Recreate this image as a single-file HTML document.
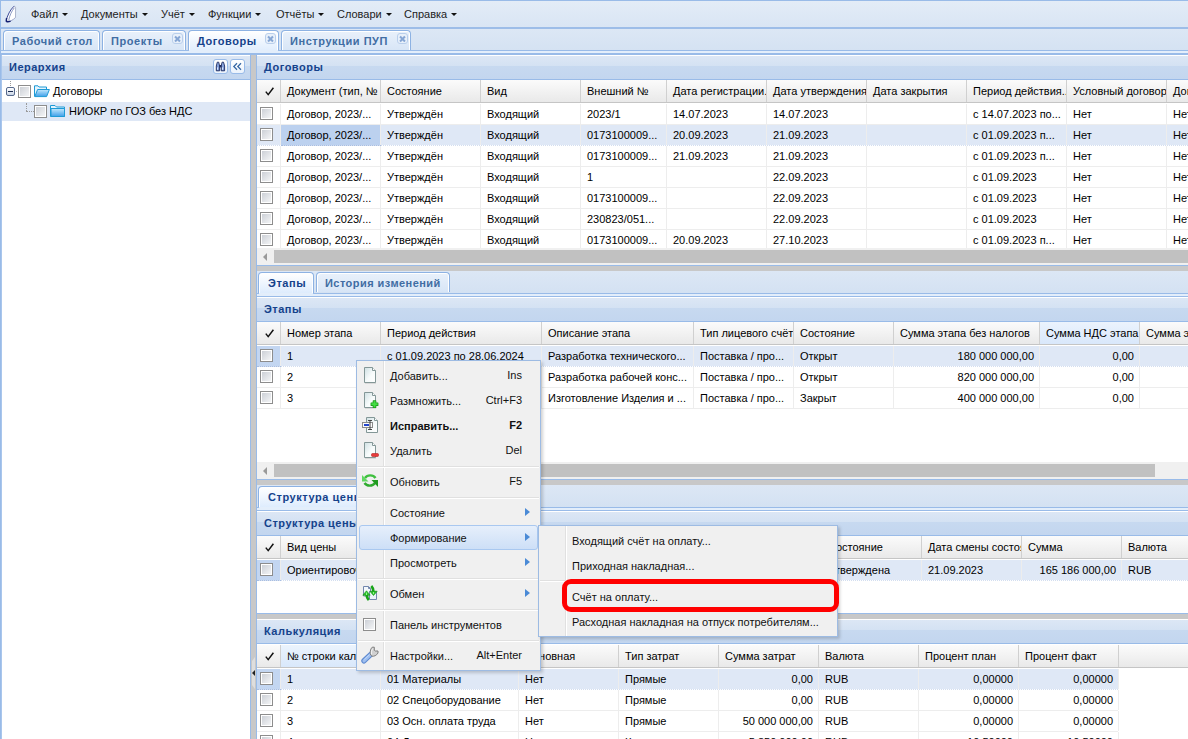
<!DOCTYPE html><html><head><meta charset="utf-8"><style>
*{box-sizing:border-box}
html,body{margin:0;padding:0}
body{width:1188px;height:739px;overflow:hidden;position:relative;font:11px "Liberation Sans",sans-serif;background:#fff;color:#000}
.a{position:absolute}
.t{position:absolute;white-space:nowrap;line-height:13px}
.menubar{left:0;top:0;width:1188px;height:29px;background:linear-gradient(#e3ecf7,#d9e5f4);border-top:1px solid #99bbe8;border-left:1px solid #99bbe8;border-bottom:2px solid #9dbde8}
.arr{display:inline-block;vertical-align:middle;margin-left:4px;margin-top:-1px;width:0;height:0;border-left:3px solid transparent;border-right:3px solid transparent;border-top:3px solid #111}
.tabbar{left:0;top:29px;width:1188px;height:26px;background:linear-gradient(#dce7f5,#d3e1f2);border-left:1px solid #99bbe8}
.tab{position:absolute;top:30px;height:21px;border:1px solid #8db2e3;border-bottom:none;border-radius:4px 4px 0 0;background:linear-gradient(#e9f1fb,#d7e5f6);box-shadow:inset 1px 1px 0 #fff,inset -1px 0 0 #fff}
.tab.act{background:linear-gradient(#ffffff,#deecfd);height:22px}
.tabtxt{position:absolute;top:4px;font-weight:bold;color:#416da3;letter-spacing:0.55px;white-space:nowrap;line-height:13px}
.tab.act .tabtxt{color:#15428b}
.cls{position:absolute;top:2px;width:11px;height:11px;border:1px solid #b9cfec;border-radius:3px;background:#e8f0fa}
.cls:before,.cls:after{content:"";position:absolute;left:1px;top:3.5px;width:7px;height:2px;background:#86a6d4;transform:rotate(45deg)}
.cls:after{transform:rotate(-45deg)}
.strip{position:absolute;height:5px;background:#e3eefb;border-top:1px solid #99bbe8;border-bottom:2px solid #99bbe8}
.ph{position:absolute;height:25px;border-bottom:1px solid #99bbe8;background:linear-gradient(#fff 0,#fff 1px,#dce7f5 1px,#d4e2f3 11px,#c7d9f0 11px,#c3d6ef 100%)}
.pht{position:absolute;top:6px;left:7px;font-weight:bold;color:#15428b;letter-spacing:0.5px;white-space:nowrap;line-height:13px}
.gh{position:absolute;height:23px;background:linear-gradient(#fbfbfb,#e9e9e9);border-bottom:1px solid #c5c5c5}
.ghc{position:absolute;top:0;height:22px;border-right:1px solid #d0d0d0;overflow:hidden}
.ghc span{position:absolute;left:6px;top:5px;white-space:nowrap;line-height:13px}
.row{position:absolute;height:21px;border-bottom:1px solid #ededed;background:#fff}
.row.sel{background:#dfe8f6;background-clip:padding-box;border-bottom:1px dotted #d3def0}
.c{position:absolute;top:0;height:20px;border-right:1px solid #ededed;overflow:hidden}
.c span{position:absolute;left:6px;top:4px;white-space:nowrap;line-height:13px}
.c.r span{left:auto;right:5px}
.c.dk{background:#bcd1ef}
.c.md{background:#c3d6f1}
.cb{position:absolute;width:13px;height:13px;border:1px solid #8d8d8d;background:linear-gradient(135deg,#c8ccd3,#f8f9fa);box-shadow:inset 0 0 0 1px #fff}
.split{position:absolute;background:#c8c8c8}
.sb{position:absolute;background:#f0f0f0}
.thumb{position:absolute;background:#c1c1c1}
.menu{position:absolute;background:#f0f0f0;border:1px solid #9dbbe3;box-shadow:2px 2px 3px rgba(0,0,0,0.18)}
.mvsep{position:absolute;width:2px;border-left:1px solid #e0e0e0;border-right:1px solid #fff}
.mhsep{position:absolute;height:2px;border-top:1px solid #e0e0e0;border-bottom:1px solid #fff}
.mt{position:absolute;white-space:nowrap;color:#111;line-height:13px}
.subarr{position:absolute;width:0;height:0;border-top:4.5px solid transparent;border-bottom:4.5px solid transparent;border-left:5px solid #4a8ad6}
</style></head><body>
<div class="a menubar"></div>
<svg class="a" style="left:0;top:0" width="24" height="28" viewBox="0 0 24 28"><path d="M14 6.2 C10.5 9.5 7 15.5 6 21.7 C9 22 12.8 20.4 15.5 17.5 L15.6 8 C15.6 7 15 6.2 14 6.2 Z" fill="#fff"/><path d="M14 6.2 C15 6.2 15.6 7 15.6 8 L15.5 17.5" fill="none" stroke="#9aa4bf" stroke-width="0.8"/><path d="M14 6.2 C10.5 9.5 7 15.5 6 21.7" fill="none" stroke="#27358a" stroke-width="0.9"/><path d="M14.3 7.8 C12 10.8 9.4 15.5 8.7 20.6" fill="none" stroke="#6f80b5" stroke-width="0.8"/><path d="M6 21.7 C9 22 12.8 20.4 15.5 17.5" fill="none" stroke="#8c96c0" stroke-width="0.8"/><path d="M6.6 18.2 C6.1 20.3 6.3 21.7 7.6 21.8 C8.6 21.8 9.6 21.6 10.6 21.2" fill="none" stroke="#121d70" stroke-width="1.4"/></svg>
<div class="t" style="left:31px;top:8px;color:#222">Файл<i class="arr"></i></div>
<div class="t" style="left:81px;top:8px;color:#222">Документы<i class="arr"></i></div>
<div class="t" style="left:161px;top:8px;color:#222">Учёт<i class="arr"></i></div>
<div class="t" style="left:208px;top:8px;color:#222">Функции<i class="arr"></i></div>
<div class="t" style="left:276px;top:8px;color:#222">Отчёты<i class="arr"></i></div>
<div class="t" style="left:337px;top:8px;color:#222">Словари<i class="arr"></i></div>
<div class="t" style="left:404px;top:8px;color:#222">Справка<i class="arr"></i></div>
<div class="a tabbar"></div>
<div class="tab" style="left:3px;width:97px"><div class="tabtxt" style="left:8px">Рабочий стол</div></div>
<div class="tab" style="left:102px;width:84px"><div class="tabtxt" style="left:8px">Проекты</div><div class="cls" style="left:69px"></div></div>
<div class="tab act" style="left:188px;width:91px"><div class="tabtxt" style="left:8px">Договоры</div><div class="cls" style="left:76px"></div></div>
<div class="tab" style="left:281px;width:130px"><div class="tabtxt" style="left:8px">Инструкции ПУП</div><div class="cls" style="left:115px"></div></div>
<div class="strip" style="left:1px;top:50px;width:1187px"></div>
<div class="a" style="left:189px;top:50px;width:89px;height:1px;background:#e3eefb"></div>
<div class="ph" style="left:1px;top:55px;width:250px"><div class="pht" style="left:8px">Иерархия</div></div>
<div class="a" style="left:213px;top:59px;width:15px;height:15px;border:1px solid #99bbe8;border-radius:3px;background:linear-gradient(#fff,#eaf2fc)"></div>
<svg class="a" style="left:215px;top:61px" width="11" height="11" viewBox="0 0 11 11"><defs><linearGradient id="bng" x1="0" y1="0" x2="0" y2="1"><stop offset="0" stop-color="#9fbaf0"/><stop offset="1" stop-color="#5d7cc0"/></linearGradient></defs><path d="M1.3 9.8 V5 L2.3 1.2 H3.7 L4.6 5 V9.8 Z" fill="url(#bng)" stroke="#1f2b5e" stroke-width="0.9" stroke-linejoin="round"/><path d="M6.2 9.8 V5 L7.1 1.2 H8.5 L9.6 5 V9.8 Z" fill="url(#bng)" stroke="#1f2b5e" stroke-width="0.9" stroke-linejoin="round"/><rect x="4.4" y="4" width="2" height="2.4" fill="#1f2b5e"/><rect x="2" y="6.3" width="1.2" height="2.5" fill="#d7e6ff"/><rect x="7" y="6.3" width="1.2" height="2.5" fill="#d7e6ff"/></svg>
<div class="a" style="left:230px;top:59px;width:15px;height:15px;border:1px solid #99bbe8;border-radius:3px;background:linear-gradient(#fff,#eaf2fc)"></div>
<svg class="a" style="left:232px;top:61px" width="11" height="11" viewBox="0 0 11 11"><path d="M5 2.2 L1.8 5.5 L5 8.8 M9 2.2 L5.8 5.5 L9 8.8" fill="none" stroke="#3466a3" stroke-width="1.25"/></svg>
<div class="a" style="left:1px;top:80px;width:249px;height:659px;background:#fff"></div>
<div class="a" style="left:1px;top:102px;width:249px;height:19px;background:#dfe8f6"></div>
<div class="a" style="left:10px;top:81px;width:0;height:5px;border-left:1px dotted #9a9a9a"></div>
<div class="a" style="left:16px;top:91px;width:1px;height:1px;background:#bbb"></div>
<div class="a" style="left:26px;top:103px;width:0;height:8px;border-left:1px dotted #9a9a9a"></div>
<div class="a" style="left:26px;top:111px;width:8px;height:0;border-top:1px dotted #9a9a9a"></div>
<div class="a" style="left:6px;top:87px;width:9px;height:9px;border:1px solid #56698c;border-radius:2px;background:linear-gradient(#ffffff,#c9d5e6)"></div><div class="a" style="left:8px;top:90.5px;width:5px;height:1.6px;background:#1a2a50"></div>
<div class="cb" style="left:18px;top:85px"></div>
<svg class="a" style="left:34px;top:85px" width="16" height="13" viewBox="0 0 16 13"><path d="M0.5 11.5 V0.8 H4 L5 2 H12.5 V4.5" fill="#e3f4fe" stroke="#1e9ad6"/><path d="M0.8 11.6 L3.6 4.5 H15.4 L12.6 11.6 Z" fill="url(#fg)" stroke="#1e9ad6" stroke-linejoin="round"/></svg>
<div class="t" style="left:53px;top:85px;">Договоры</div>
<div class="cb" style="left:34px;top:105px"></div>
<svg class="a" style="left:50px;top:105px" width="16" height="13" viewBox="0 0 16 13"><path d="M0.5 11.5 V0.5 H5 L6.5 2 H14.5 V11.5 Z" fill="#e3f4fe" stroke="#1e9ad6"/><path d="M1 11.5 V3.5 H14.5 V11.5 Z" fill="url(#fg)" stroke="#1e9ad6"/></svg>
<div class="t" style="left:69px;top:105px;">НИОКР по ГОЗ без НДС</div>
<div class="a" style="left:0;top:0;width:1px;height:739px;background:#99bbe8"></div>
<div class="a" style="left:1px;top:55px;width:1px;height:684px;background:#a9c6ec"></div>
<div class="a" style="left:250px;top:55px;width:1px;height:684px;background:#99bbe8"></div>
<div class="split" style="left:251px;top:55px;width:5px;height:684px"></div>
<div class="a" style="left:256px;top:55px;width:1px;height:684px;background:#99bbe8"></div>
<div class="a" style="left:252px;top:657px;width:3px;height:32px;background:#dedede;clip-path:polygon(0 4px,100% 0,100% 100%,0 calc(100% - 4px))"></div>
<div class="a" style="left:252px;top:670px;width:0;height:0;border-top:3px solid transparent;border-bottom:3px solid transparent;border-right:3px solid #222"></div>
<div class="a" style="left:1187px;top:55px;width:1px;height:0"></div>
<div class="ph" style="left:257px;top:55px;width:931px"><div class="pht">Договоры</div></div>
<div class="gh" style="left:257px;top:80px;width:931px">
<div class="ghc" style="left:0px;width:24px;"><svg style="position:absolute;left:8px;top:7px" width="9" height="9" viewBox="0 0 9 9"><path d="M0.8 4.6 L3.2 7.6 L8.4 0.8" fill="none" stroke="#111" stroke-width="1.5"/></svg></div>
<div class="ghc" style="left:24px;width:100px;"><span>Документ (тип, №</span></div>
<div class="ghc" style="left:124px;width:100px;"><span>Состояние</span></div>
<div class="ghc" style="left:224px;width:100px;"><span>Вид</span></div>
<div class="ghc" style="left:324px;width:86px;"><span>Внешний №</span></div>
<div class="ghc" style="left:410px;width:100px;"><span>Дата регистрации...</span></div>
<div class="ghc" style="left:510px;width:100px;"><span>Дата утверждения</span></div>
<div class="ghc" style="left:610px;width:100px;"><span>Дата закрытия</span></div>
<div class="ghc" style="left:710px;width:100px;"><span>Период действия...</span></div>
<div class="ghc" style="left:810px;width:100px;"><span>Условный договор</span></div>
<div class="ghc" style="left:910px;width:100px;"><span>Договор</span></div>
</div>
<div class="row" style="left:257px;top:104px;width:931px">
<div class="c" style="left:0px;width:24px"><div class="cb" style="left:3px;top:3px"></div></div>
<div class="c" style="left:24px;width:100px"><span>Договор, 2023/...</span></div>
<div class="c" style="left:124px;width:100px"><span>Утверждён</span></div>
<div class="c" style="left:224px;width:100px"><span>Входящий</span></div>
<div class="c" style="left:324px;width:86px"><span>2023/1</span></div>
<div class="c" style="left:410px;width:100px"><span>14.07.2023</span></div>
<div class="c" style="left:510px;width:100px"><span>14.07.2023</span></div>
<div class="c" style="left:610px;width:100px"><span></span></div>
<div class="c" style="left:710px;width:100px"><span>с 14.07.2023 по...</span></div>
<div class="c" style="left:810px;width:100px"><span>Нет</span></div>
<div class="c" style="left:910px;width:100px"><span>Нет</span></div>
</div>
<div class="row sel" style="left:257px;top:125px;width:931px">
<div class="c" style="left:0px;width:24px"><div class="cb" style="left:3px;top:3px"></div></div>
<div class="c dk" style="left:24px;width:100px"><span>Договор, 2023/...</span></div>
<div style="position:absolute;left:24px;top:20px;width:100px;height:1px;border-top:1px dotted #a8bee2"></div>
<div class="c" style="left:124px;width:100px"><span>Утверждён</span></div>
<div class="c" style="left:224px;width:100px"><span>Входящий</span></div>
<div class="c" style="left:324px;width:86px"><span>0173100009...</span></div>
<div class="c" style="left:410px;width:100px"><span>20.09.2023</span></div>
<div class="c" style="left:510px;width:100px"><span>21.09.2023</span></div>
<div class="c" style="left:610px;width:100px"><span></span></div>
<div class="c" style="left:710px;width:100px"><span>с 01.09.2023 п...</span></div>
<div class="c" style="left:810px;width:100px"><span>Нет</span></div>
<div class="c" style="left:910px;width:100px"><span>Нет</span></div>
</div>
<div class="row" style="left:257px;top:146px;width:931px">
<div class="c" style="left:0px;width:24px"><div class="cb" style="left:3px;top:3px"></div></div>
<div class="c" style="left:24px;width:100px"><span>Договор, 2023/...</span></div>
<div class="c" style="left:124px;width:100px"><span>Утверждён</span></div>
<div class="c" style="left:224px;width:100px"><span>Входящий</span></div>
<div class="c" style="left:324px;width:86px"><span>0173100009...</span></div>
<div class="c" style="left:410px;width:100px"><span>21.09.2023</span></div>
<div class="c" style="left:510px;width:100px"><span>21.09.2023</span></div>
<div class="c" style="left:610px;width:100px"><span></span></div>
<div class="c" style="left:710px;width:100px"><span>с 01.09.2023 п...</span></div>
<div class="c" style="left:810px;width:100px"><span>Нет</span></div>
<div class="c" style="left:910px;width:100px"><span>Нет</span></div>
</div>
<div class="row" style="left:257px;top:167px;width:931px">
<div class="c" style="left:0px;width:24px"><div class="cb" style="left:3px;top:3px"></div></div>
<div class="c" style="left:24px;width:100px"><span>Договор, 2023/...</span></div>
<div class="c" style="left:124px;width:100px"><span>Утверждён</span></div>
<div class="c" style="left:224px;width:100px"><span>Входящий</span></div>
<div class="c" style="left:324px;width:86px"><span>1</span></div>
<div class="c" style="left:410px;width:100px"><span></span></div>
<div class="c" style="left:510px;width:100px"><span>22.09.2023</span></div>
<div class="c" style="left:610px;width:100px"><span></span></div>
<div class="c" style="left:710px;width:100px"><span>с 01.09.2023</span></div>
<div class="c" style="left:810px;width:100px"><span>Нет</span></div>
<div class="c" style="left:910px;width:100px"><span>Нет</span></div>
</div>
<div class="row" style="left:257px;top:188px;width:931px">
<div class="c" style="left:0px;width:24px"><div class="cb" style="left:3px;top:3px"></div></div>
<div class="c" style="left:24px;width:100px"><span>Договор, 2023/...</span></div>
<div class="c" style="left:124px;width:100px"><span>Утверждён</span></div>
<div class="c" style="left:224px;width:100px"><span>Входящий</span></div>
<div class="c" style="left:324px;width:86px"><span>0173100009...</span></div>
<div class="c" style="left:410px;width:100px"><span></span></div>
<div class="c" style="left:510px;width:100px"><span>22.09.2023</span></div>
<div class="c" style="left:610px;width:100px"><span></span></div>
<div class="c" style="left:710px;width:100px"><span>с 01.09.2023</span></div>
<div class="c" style="left:810px;width:100px"><span>Нет</span></div>
<div class="c" style="left:910px;width:100px"><span>Нет</span></div>
</div>
<div class="row" style="left:257px;top:209px;width:931px">
<div class="c" style="left:0px;width:24px"><div class="cb" style="left:3px;top:3px"></div></div>
<div class="c" style="left:24px;width:100px"><span>Договор, 2023/...</span></div>
<div class="c" style="left:124px;width:100px"><span>Утверждён</span></div>
<div class="c" style="left:224px;width:100px"><span>Входящий</span></div>
<div class="c" style="left:324px;width:86px"><span>230823/051...</span></div>
<div class="c" style="left:410px;width:100px"><span></span></div>
<div class="c" style="left:510px;width:100px"><span>22.09.2023</span></div>
<div class="c" style="left:610px;width:100px"><span></span></div>
<div class="c" style="left:710px;width:100px"><span>с 01.09.2023</span></div>
<div class="c" style="left:810px;width:100px"><span>Нет</span></div>
<div class="c" style="left:910px;width:100px"><span>Нет</span></div>
</div>
<div class="row" style="left:257px;top:230px;width:931px">
<div class="c" style="left:0px;width:24px"><div class="cb" style="left:3px;top:3px"></div></div>
<div class="c" style="left:24px;width:100px"><span>Договор, 2023/...</span></div>
<div class="c" style="left:124px;width:100px"><span>Утверждён</span></div>
<div class="c" style="left:224px;width:100px"><span>Входящий</span></div>
<div class="c" style="left:324px;width:86px"><span>0173100009...</span></div>
<div class="c" style="left:410px;width:100px"><span>20.09.2023</span></div>
<div class="c" style="left:510px;width:100px"><span>27.10.2023</span></div>
<div class="c" style="left:610px;width:100px"><span></span></div>
<div class="c" style="left:710px;width:100px"><span>с 01.09.2023 п...</span></div>
<div class="c" style="left:810px;width:100px"><span>Нет</span></div>
<div class="c" style="left:910px;width:100px"><span>Нет</span></div>
</div>
<div class="sb" style="left:257px;top:248px;width:931px;height:17px"></div>
<div class="a" style="left:263px;top:253px;width:0;height:0;border-top:4px solid transparent;border-bottom:4px solid transparent;border-right:4px solid #9a9a9a"></div>
<div class="thumb" style="left:274px;top:250px;width:914px;height:13px"></div>
<div class="a" style="left:257px;top:265px;width:931px;height:1px;background:#99bbe8"></div>
<div class="split" style="left:257px;top:266px;width:931px;height:5px"></div>
<div class="a" style="left:257px;top:271px;width:931px;height:24px;background:linear-gradient(#dce7f5,#d3e1f2)"></div>
<div class="tab act" style="left:258px;top:272px;width:56px;height:21px"><div class="tabtxt" style="left:9px;top:4px;">Этапы</div></div>
<div class="tab" style="left:316px;top:272px;width:134px;height:20px"><div class="tabtxt" style="left:8px;top:4px;letter-spacing:0.45px">История изменений</div></div>
<div class="a" style="left:257px;top:293px;width:931px;height:4px;background:#e3eefb;border-top:1px solid #99bbe8;border-bottom:1px solid #99bbe8"></div>
<div class="a" style="left:259px;top:293px;width:54px;height:1px;background:#e3eefb"></div>
<div class="ph" style="left:257px;top:297px;width:931px"><div class="pht">Этапы</div></div>
<div class="gh" style="left:257px;top:322px;width:931px">
<div class="ghc" style="left:0px;width:24px;"><svg style="position:absolute;left:8px;top:7px" width="9" height="9" viewBox="0 0 9 9"><path d="M0.8 4.6 L3.2 7.6 L8.4 0.8" fill="none" stroke="#111" stroke-width="1.5"/></svg></div>
<div class="ghc" style="left:24px;width:100px;"><span>Номер этапа</span></div>
<div class="ghc" style="left:124px;width:161px;"><span>Период действия</span></div>
<div class="ghc" style="left:285px;width:152px;"><span>Описание этапа</span></div>
<div class="ghc" style="left:437px;width:100px;"><span>Тип лицевого счёт</span></div>
<div class="ghc" style="left:537px;width:100px;"><span>Состояние</span></div>
<div class="ghc" style="left:637px;width:146px;"><span>Сумма этапа без налогов</span></div>
<div class="ghc" style="left:783px;width:100px;background:linear-gradient(#ebf3fd,#d9e8fb);"><span>Сумма НДС этапа</span></div>
<div class="ghc" style="left:883px;width:100px;"><span>Сумма этапа</span></div>
</div>
<div class="row sel" style="left:257px;top:346px;width:931px">
<div class="c md" style="left:0px;width:24px"><div class="cb" style="left:3px;top:3px"></div></div>
<div style="position:absolute;left:0px;top:20px;width:24px;height:1px;border-top:1px dotted #a8bee2"></div>
<div class="c" style="left:24px;width:100px"><span>1</span></div>
<div class="c" style="left:124px;width:161px"><span>с 01.09.2023 по 28.06.2024</span></div>
<div class="c" style="left:285px;width:152px"><span>Разработка технического...</span></div>
<div class="c" style="left:437px;width:100px"><span>Поставка / про...</span></div>
<div class="c" style="left:537px;width:100px"><span>Открыт</span></div>
<div class="c r" style="left:637px;width:146px"><span>180 000 000,00</span></div>
<div class="c r" style="left:783px;width:100px"><span>0,00</span></div>
<div class="c r" style="left:883px;width:100px"><span></span></div>
</div>
<div class="row" style="left:257px;top:367px;width:931px">
<div class="c" style="left:0px;width:24px"><div class="cb" style="left:3px;top:3px"></div></div>
<div class="c" style="left:24px;width:100px"><span>2</span></div>
<div class="c" style="left:124px;width:161px"><span>с 01.09.2023 по 28.06.2024</span></div>
<div class="c" style="left:285px;width:152px"><span>Разработка рабочей конс...</span></div>
<div class="c" style="left:437px;width:100px"><span>Поставка / про...</span></div>
<div class="c" style="left:537px;width:100px"><span>Открыт</span></div>
<div class="c r" style="left:637px;width:146px"><span>820 000 000,00</span></div>
<div class="c r" style="left:783px;width:100px"><span>0,00</span></div>
<div class="c r" style="left:883px;width:100px"><span></span></div>
</div>
<div class="row" style="left:257px;top:388px;width:931px">
<div class="c" style="left:0px;width:24px"><div class="cb" style="left:3px;top:3px"></div></div>
<div class="c" style="left:24px;width:100px"><span>3</span></div>
<div class="c" style="left:124px;width:161px"><span>с 01.09.2023 по 28.06.2024</span></div>
<div class="c" style="left:285px;width:152px"><span>Изготовление Изделия и ...</span></div>
<div class="c" style="left:437px;width:100px"><span>Поставка / про...</span></div>
<div class="c" style="left:537px;width:100px"><span>Закрыт</span></div>
<div class="c r" style="left:637px;width:146px"><span>400 000 000,00</span></div>
<div class="c r" style="left:783px;width:100px"><span>0,00</span></div>
<div class="c r" style="left:883px;width:100px"><span></span></div>
</div>
<div class="sb" style="left:257px;top:462px;width:931px;height:17px"></div>
<div class="a" style="left:263px;top:467px;width:0;height:0;border-top:4px solid transparent;border-bottom:4px solid transparent;border-right:4px solid #9a9a9a"></div>
<div class="thumb" style="left:274px;top:464px;width:881px;height:13px"></div>
<div class="a" style="left:257px;top:479px;width:931px;height:1px;background:#99bbe8"></div>
<div class="split" style="left:257px;top:480px;width:931px;height:5px"></div>
<div class="a" style="left:257px;top:485px;width:931px;height:24px;background:linear-gradient(#dce7f5,#d3e1f2)"></div>
<div class="tab act" style="left:258px;top:486px;width:110px;height:21px"><div class="tabtxt" style="left:9px;top:4px">Структура цены</div></div>
<div class="a" style="left:257px;top:507px;width:931px;height:4px;background:#e3eefb;border-top:1px solid #99bbe8;border-bottom:1px solid #99bbe8"></div>
<div class="a" style="left:259px;top:507px;width:108px;height:1px;background:#e3eefb"></div>
<div class="ph" style="left:257px;top:511px;width:931px"><div class="pht">Структура цены</div></div>
<div class="gh" style="left:257px;top:536px;width:931px">
<div class="ghc" style="left:0px;width:24px;"><svg style="position:absolute;left:8px;top:7px" width="9" height="9" viewBox="0 0 9 9"><path d="M0.8 4.6 L3.2 7.6 L8.4 0.8" fill="none" stroke="#111" stroke-width="1.5"/></svg></div>
<div class="ghc" style="left:24px;width:100px;"><span>Вид цены</span></div>
<div class="ghc" style="left:124px;width:100px;"><span></span></div>
<div class="ghc" style="left:224px;width:100px;"><span></span></div>
<div class="ghc" style="left:324px;width:100px;"><span></span></div>
<div class="ghc" style="left:424px;width:141px;"><span></span></div>
<div class="ghc" style="left:565px;width:100px;"><span>Состояние</span></div>
<div class="ghc" style="left:665px;width:100px;"><span>Дата смены состояния</span></div>
<div class="ghc" style="left:765px;width:100px;"><span>Сумма</span></div>
<div class="ghc" style="left:865px;width:100px;"><span>Валюта</span></div>
</div>
<div class="row sel" style="left:257px;top:560px;width:931px">
<div class="c md" style="left:0px;width:24px"><div class="cb" style="left:3px;top:3px"></div></div>
<div style="position:absolute;left:0px;top:20px;width:24px;height:1px;border-top:1px dotted #a8bee2"></div>
<div class="c" style="left:24px;width:100px"><span>Ориентировочная</span></div>
<div class="c" style="left:124px;width:100px"><span></span></div>
<div class="c" style="left:224px;width:100px"><span></span></div>
<div class="c" style="left:324px;width:100px"><span></span></div>
<div class="c" style="left:424px;width:141px"><span></span></div>
<div class="c" style="left:565px;width:100px"><span>Утверждена</span></div>
<div class="c" style="left:665px;width:100px"><span>21.09.2023</span></div>
<div class="c r" style="left:765px;width:100px"><span>165 186 000,00</span></div>
<div class="c" style="left:865px;width:100px"><span>RUB</span></div>
</div>
<div class="a" style="left:257px;top:613px;width:931px;height:1px;background:#99bbe8"></div>
<div class="split" style="left:257px;top:614px;width:931px;height:5px"></div>
<div class="ph" style="left:257px;top:619px;width:931px"><div class="pht">Калькуляция</div></div>
<div class="gh" style="left:257px;top:645px;width:931px">
<div class="ghc" style="left:0px;width:24px;"><svg style="position:absolute;left:8px;top:7px" width="9" height="9" viewBox="0 0 9 9"><path d="M0.8 4.6 L3.2 7.6 L8.4 0.8" fill="none" stroke="#111" stroke-width="1.5"/></svg></div>
<div class="ghc" style="left:24px;width:100px;background:linear-gradient(#ebf3fd,#d9e8fb);"><span>№ строки калькуляции</span></div>
<div class="ghc" style="left:124px;width:138px;"><span>Статья затрат</span></div>
<div class="ghc" style="left:262px;width:100px;"><span>Основная</span></div>
<div class="ghc" style="left:362px;width:100px;"><span>Тип затрат</span></div>
<div class="ghc" style="left:462px;width:100px;"><span>Сумма затрат</span></div>
<div class="ghc" style="left:562px;width:100px;"><span>Валюта</span></div>
<div class="ghc" style="left:662px;width:100px;"><span>Процент план</span></div>
<div class="ghc" style="left:762px;width:100px;"><span>Процент факт</span></div>
</div>
<div class="row sel" style="left:257px;top:669px;width:861px">
<div class="c md" style="left:0px;width:24px"><div class="cb" style="left:3px;top:3px"></div></div>
<div style="position:absolute;left:0px;top:20px;width:24px;height:1px;border-top:1px dotted #a8bee2"></div>
<div class="c" style="left:24px;width:100px"><span>1</span></div>
<div class="c" style="left:124px;width:138px"><span>01 Материалы</span></div>
<div class="c" style="left:262px;width:100px"><span>Нет</span></div>
<div class="c" style="left:362px;width:100px"><span>Прямые</span></div>
<div class="c r" style="left:462px;width:100px"><span>0,00</span></div>
<div class="c" style="left:562px;width:100px"><span>RUB</span></div>
<div class="c r" style="left:662px;width:100px"><span>0,00000</span></div>
<div class="c r" style="left:762px;width:100px"><span>0,00000</span></div>
</div>
<div class="row" style="left:257px;top:690px;width:861px">
<div class="c" style="left:0px;width:24px"><div class="cb" style="left:3px;top:3px"></div></div>
<div class="c" style="left:24px;width:100px"><span>2</span></div>
<div class="c" style="left:124px;width:138px"><span>02 Спецоборудование</span></div>
<div class="c" style="left:262px;width:100px"><span>Нет</span></div>
<div class="c" style="left:362px;width:100px"><span>Прямые</span></div>
<div class="c r" style="left:462px;width:100px"><span>0,00</span></div>
<div class="c" style="left:562px;width:100px"><span>RUB</span></div>
<div class="c r" style="left:662px;width:100px"><span>0,00000</span></div>
<div class="c r" style="left:762px;width:100px"><span>0,00000</span></div>
</div>
<div class="row" style="left:257px;top:711px;width:861px">
<div class="c" style="left:0px;width:24px"><div class="cb" style="left:3px;top:3px"></div></div>
<div class="c" style="left:24px;width:100px"><span>3</span></div>
<div class="c" style="left:124px;width:138px"><span>03 Осн. оплата труда</span></div>
<div class="c" style="left:262px;width:100px"><span>Нет</span></div>
<div class="c" style="left:362px;width:100px"><span>Прямые</span></div>
<div class="c r" style="left:462px;width:100px"><span>50 000 000,00</span></div>
<div class="c" style="left:562px;width:100px"><span>RUB</span></div>
<div class="c r" style="left:662px;width:100px"><span>0,00000</span></div>
<div class="c r" style="left:762px;width:100px"><span>0,00000</span></div>
</div>
<div class="row" style="left:257px;top:732px;width:861px">
<div class="c" style="left:0px;width:24px"><div class="cb" style="left:3px;top:3px"></div></div>
<div class="c" style="left:24px;width:100px"><span>4</span></div>
<div class="c" style="left:124px;width:138px"><span>04 Доп. оплата труда</span></div>
<div class="c" style="left:262px;width:100px"><span>Нет</span></div>
<div class="c" style="left:362px;width:100px"><span>Косвенные</span></div>
<div class="c r" style="left:462px;width:100px"><span>5 850 000,00</span></div>
<div class="c" style="left:562px;width:100px"><span>RUB</span></div>
<div class="c r" style="left:662px;width:100px"><span>10,50000</span></div>
<div class="c r" style="left:762px;width:100px"><span>10,50000</span></div>
</div>
<div class="a" style="left:1187px;top:55px;width:1px;height:684px;background:transparent"></div>
<div class="menu" style="left:356px;top:360px;width:185px;height:311px"></div>
<div class="mvsep" style="left:383px;top:361px;height:309px"></div>
<div class="a" style="left:359px;top:525px;width:179px;height:25px;border:1px solid #a9c8f0;border-radius:3px;background:linear-gradient(#e6effb,#cddff7)"></div>
<div class="mt" style="left:390px;top:370px;">Добавить...</div>
<div class="mt" style="right:666px;top:369px;">Ins</div>
<div class="mt" style="left:390px;top:395px;">Размножить...</div>
<div class="mt" style="right:666px;top:394px;">Ctrl+F3</div>
<div class="mt" style="left:390px;top:420px;font-weight:bold;">Исправить...</div>
<div class="mt" style="right:666px;top:419px;font-weight:bold;">F2</div>
<div class="mt" style="left:390px;top:445px;">Удалить</div>
<div class="mt" style="right:666px;top:444px;">Del</div>
<div class="mhsep" style="left:358px;top:466px;width:181px"></div>
<div class="mt" style="left:390px;top:476px;">Обновить</div>
<div class="mt" style="right:666px;top:475px;">F5</div>
<div class="mhsep" style="left:358px;top:497px;width:181px"></div>
<div class="mt" style="left:390px;top:507px;">Состояние</div>
<div class="subarr" style="left:525px;top:508px"></div>
<div class="mt" style="left:390px;top:532px;">Формирование</div>
<div class="subarr" style="left:525px;top:533px"></div>
<div class="mt" style="left:390px;top:557px;">Просмотреть</div>
<div class="subarr" style="left:525px;top:558px"></div>
<div class="mhsep" style="left:358px;top:578px;width:181px"></div>
<div class="mt" style="left:390px;top:588px;">Обмен</div>
<div class="subarr" style="left:525px;top:589px"></div>
<div class="mhsep" style="left:358px;top:609px;width:181px"></div>
<div class="mt" style="left:390px;top:619px;">Панель инструментов</div>
<div class="mhsep" style="left:358px;top:640px;width:181px"></div>
<div class="mt" style="left:390px;top:650px;">Настройки...</div>
<div class="mt" style="right:666px;top:649px;">Alt+Enter</div>
<svg width="0" height="0" style="position:absolute"><defs><linearGradient id="dg" x1="0" y1="0" x2="1" y2="1"><stop offset="0" stop-color="#cfe0e3"/><stop offset="0.55" stop-color="#f7fbfb"/><stop offset="1" stop-color="#ffffff"/></linearGradient><linearGradient id="gg" x1="0" y1="0" x2="1" y2="1"><stop offset="0" stop-color="#8ef07a"/><stop offset="1" stop-color="#159a15"/></linearGradient><linearGradient id="fg" x1="0" y1="0" x2="0" y2="1"><stop offset="0" stop-color="#c2e8fd"/><stop offset="1" stop-color="#3f9fe9"/></linearGradient><linearGradient id="cbg" x1="0" y1="0" x2="1" y2="1"><stop offset="0" stop-color="#cfd3d8"/><stop offset="1" stop-color="#fcfcfc"/></linearGradient></defs></svg>
<svg class="a" style="left:364px;top:367px" width="16" height="17" viewBox="0 0 16 17"><rect x="1" y="15.6" width="11" height="1.2" fill="#000" opacity="0.12"/><path d="M0.5 0.5 H8.5 L11.5 3.5 V15.5 H0.5 Z" fill="url(#dg)" stroke="#839797"/><path d="M8.5 0.5 V3.5 H11.5" fill="#fff" stroke="#839797"/></svg>
<svg class="a" style="left:364px;top:392px" width="16" height="17" viewBox="0 0 16 17"><rect x="1" y="15.6" width="11" height="1.2" fill="#000" opacity="0.12"/><path d="M0.5 0.5 H8.5 L11.5 3.5 V15.5 H0.5 Z" fill="url(#dg)" stroke="#839797"/><path d="M8.5 0.5 V3.5 H11.5" fill="#fff" stroke="#839797"/><rect x="6.6" y="10.4" width="7.8" height="3.6" rx="0.6" fill="#1a9a1a"/><rect x="8.7" y="8.3" width="3.6" height="7.8" rx="0.6" fill="#1a9a1a"/><rect x="7.4" y="11.2" width="6.2" height="2" fill="#44dd44"/><rect x="9.5" y="9.1" width="2" height="6.2" fill="#44dd44"/></svg>
<svg class="a" style="left:362px;top:417px" width="17" height="17" viewBox="0 0 17 17"><path d="M4.5 0.5 H12.5 L15.5 3.5 V15.5 H4.5 Z" fill="url(#dg)" stroke="#839797"/><path d="M12.5 0.5 V3.5 H15.5" fill="#fff" stroke="#839797"/><rect x="0.5" y="5.5" width="10" height="5" fill="#fafafa" stroke="#8a8a8a"/><rect x="2" y="7" width="5" height="2" fill="#2244cc"/><path d="M8 3.5 V12.5 M6 3.5 H10 M6 12.5 H10" stroke="#333" stroke-width="0.9" fill="none"/></svg>
<svg class="a" style="left:364px;top:442px" width="16" height="17" viewBox="0 0 16 17"><rect x="1" y="15.6" width="11" height="1.2" fill="#000" opacity="0.12"/><path d="M0.5 0.5 H8.5 L11.5 3.5 V15.5 H0.5 Z" fill="url(#dg)" stroke="#839797"/><path d="M8.5 0.5 V3.5 H11.5" fill="#fff" stroke="#839797"/><rect x="7.5" y="11.5" width="7" height="3" rx="1" fill="#e63b3b" stroke="#b32020" stroke-width="0.6"/></svg>
<svg class="a" style="left:361px;top:473px" width="18" height="16" viewBox="0 0 18 16"><path d="M14.5 5 A6 5 0 0 0 4 5" fill="none" stroke="#3fbf3f" stroke-width="2.4"/><path d="M1 2 V8.5 H7.5 Z" fill="#5fd85f"/><path d="M3.5 10 A6 5 0 0 0 14 10" fill="none" stroke="#2faa2f" stroke-width="2.4"/><path d="M17 7 V14 L10.5 7 Z" fill="#1f9a1f"/></svg>
<svg class="a" style="left:362px;top:585px" width="16" height="16" viewBox="0 0 16 16"><path d="M1.5 1.5 H6.5 L8.5 3.5 V11 H1.5 Z" fill="#f4f8fc" stroke="#7286ad"/><path d="M6.5 1.5 V3.5 H8.5" fill="none" stroke="#7286ad"/><path d="M7.5 6.5 H14.5 V14.5 H7.5 Z" fill="#eaf2fa" stroke="#7286ad"/><path d="M4.5 8.5 C4.6 11.5 5.2 13.5 6.8 15" fill="none" stroke="#18a418" stroke-width="2.6"/><path d="M0.8 10.2 L4.5 5.8 L8.2 10.2 Z" fill="#2fbf2f" stroke="#139a13" stroke-width="0.6" stroke-linejoin="round"/><path d="M9.3 1 C10.8 2.5 11.4 4.5 11.5 7" fill="none" stroke="#18a418" stroke-width="2.6"/><path d="M7.8 6.2 L15.2 6.2 L11.5 10.5 Z" fill="#2fbf2f" stroke="#139a13" stroke-width="0.6" stroke-linejoin="round"/><path d="M4.5 7.5 V10 M11.5 7 V9" stroke="#8ef58e" stroke-width="1"/></svg>
<div class="cb" style="left:363px;top:618px"></div>
<svg class="a" style="left:361px;top:646px" width="18" height="18" viewBox="0 0 18 18"><path d="M3 14.8 L9.8 8.4" stroke="#5f8ad0" stroke-width="5.4" stroke-linecap="round"/><path d="M3 14.8 L9.8 8.4" stroke="#9ebff0" stroke-width="3.2" stroke-linecap="round"/><path d="M3.6 13.2 L8.2 8.9" stroke="#c4dafa" stroke-width="0.9" stroke-linecap="round"/><path d="M9.8 9.2 C8.6 7 9.2 3 11.2 1.2 L13.3 1.2 L13.3 4.3 L14.1 5 L17 5 L17 7 C15.5 9.6 13 10.5 11 10.2 Z" fill="#d0d0d0" stroke="#7f7f7f" stroke-width="1" stroke-linejoin="round"/><path d="M10.6 8.4 C10 6.5 10.5 4 11.8 2.6" fill="none" stroke="#fff" stroke-width="0.8"/></svg>
<div class="menu" style="left:538px;top:525px;width:300px;height:112px"></div>
<div class="mvsep" style="left:565px;top:526px;height:110px"></div>
<div class="mt" style="left:572px;top:535px">Входящий счёт на оплату...</div>
<div class="mt" style="left:572px;top:560px">Приходная накладная...</div>
<div class="mt" style="left:572px;top:591px">Счёт на оплату...</div>
<div class="mt" style="left:572px;top:616px">Расходная накладная на отпуск потребителям...</div>
<div class="mhsep" style="left:540px;top:580px;width:296px"></div>
<div class="a" style="left:562px;top:579px;width:277px;height:33px;border:5.5px solid #ff0000;border-radius:9px"></div>
</body></html>
